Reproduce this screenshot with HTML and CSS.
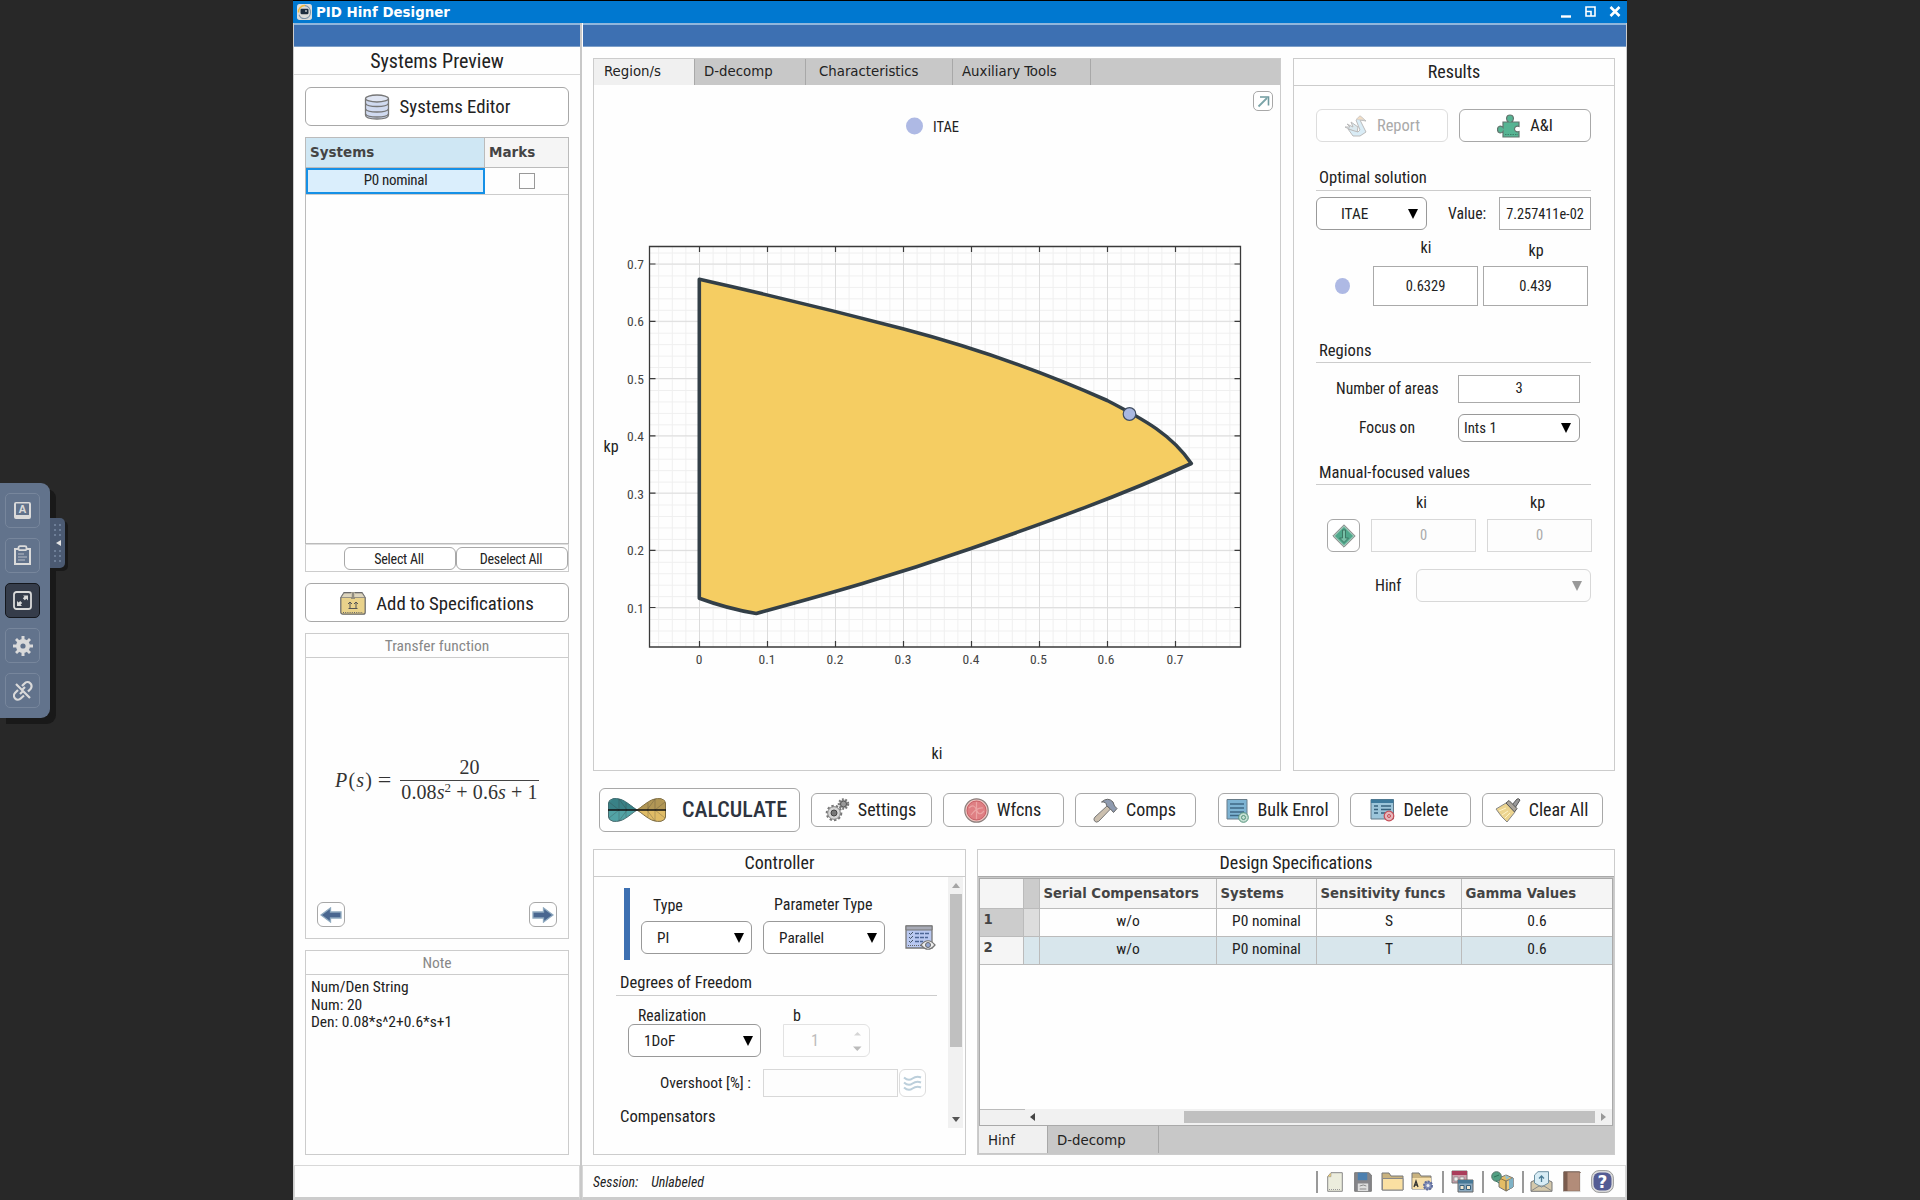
FILE: index.html
```html
<!DOCTYPE html>
<html lang="en">
<head>
<meta charset="utf-8">
<title>PID Hinf Designer</title>
<link rel="stylesheet" href="styles.css">
</head>
<body>
<div class="desktop">
  <main class="window">
    <header class="titlebar">
      <svg class="app-icon" width="15" height="16" viewBox="0 0 15 15" preserveAspectRatio="none"><rect width="15" height="15" rx="2.5" fill="#dcdcda"/><path d="M1.500 8A6 6 0 0 1 8 1.500" fill="none" stroke="#f0b83c" stroke-width="1.500"/><path d="M8 1.500A6 6 0 0 1 13.500 8a6 6 0 0 1-11.500 2" fill="none" stroke="#7d93a8" stroke-width="1"/><rect x="3.500" y="4.500" width="8" height="5" rx="1" fill="#1c2c3e"/><path d="M8 6.500h2" stroke="#fff"/></svg>
      <h1>PID Hinf Designer</h1>
      <svg class="window-buttons" width="62" height="14" viewBox="0 0 62 14"><path d="M1 11.500h10" stroke="#fff" stroke-width="2.400"/><path d="M26 2h9v9h-9zM26 6.500h5v4.500" fill="none" stroke="#fff" stroke-width="1.600"/><path d="M50.500 2l9 9M59.500 2l-9 9" stroke="#fff" stroke-width="2.600"/></svg>
    </header>
    <div class="panes">
      <aside class="left-pane">
        <div class="ribbon"></div>
        <h2 class="pane-title">Systems Preview</h2>
        <div class="left-body">
          <button class="btn big">
            <svg width="26" height="26" viewBox="0 0 26 26"><path d="M1.500 5v16c0 2.500 5 4 11.500 4s11.500-1.500 11.500-4V5" fill="#d0daf0" stroke="#777" stroke-width="1.300"/><ellipse cx="13" cy="4.500" rx="11.500" ry="3.500" fill="#dfe5f3" stroke="#777" stroke-width="1.300"/><path d="M1.500 9.500c2 4 21 4 23 0M1.500 15c2 4 21 4 23 0M1.500 20c2 4 21 4 23 0" fill="none" stroke="#777" stroke-width="1.300"/></svg>
            <span>Systems Editor</span>
          </button>
          <div class="systems-table">
            <div class="sys-head"><b>Systems</b><b>Marks</b></div>
            <div class="sys-row"><span class="selected-cell">P0 nominal</span><span class="mark"><i></i></span></div>
          </div>
          <div class="select-bar"><button class="btn">Select All</button><button class="btn">Deselect All</button></div>
          <button class="btn big add">
            <svg width="26" height="23" viewBox="0 0 26 23"><path d="M4 .7h18l3.200 5v14.500q0 2-2 2H2.800q-2 0-2-2V5.700z" fill="#e9d28b" stroke="#666" stroke-width="1.200"/><path d="M4 1h18l3 4.500H1z" fill="#ddd5bd" stroke="#777" stroke-width=".7"/><path d="M11 .5h4v6h-4z" fill="#ccc4ac"/><path d="M13 1v4M11 6h4M10 16v-6m-2 2l2-2 2 2M16 16v-6m-2 2l2-2 2 2M8.500 16.500h9" stroke="#555" fill="none"/><path d="M3 20.500h20" stroke="#666" stroke-dasharray="1 1.200"/></svg>
            <span>Add to Specifications</span>
          </button>
          <section class="box tf">
            <h3>Transfer function</h3>
            <div class="formula">
              <span class="lhs"><i>P</i>(<i>s</i>) <span class="eq">=</span></span>
              <span class="frac"><span>20</span><span class="den">0.08<i>s</i><sup>2</sup> + 0.6<i>s</i> + 1</span></span>
            </div>
            <div class="nav">
              <button class="btn"><svg width="22" height="16" viewBox="0 0 22 16"><path d="M1 8l9.500-7v4H21v6H10.500v4z" fill="#4a6790" stroke="#8ea9bf" stroke-width="1.300"/></svg></button>
              <button class="btn"><svg width="22" height="16" viewBox="0 0 22 16"><path d="M21 8l-9.500-7v4H1v6h10.500v4z" fill="#4a6790" stroke="#8ea9bf" stroke-width="1.300"/></svg></button>
            </div>
          </section>
          <section class="box note">
            <h3>Note</h3>
            <p>Num/Den String<br>Num: 20<br>Den: 0.08*s^2+0.6*s+1</p>
          </section>
        </div>
        <div class="left-status"></div>
      </aside>

      <div class="right-pane">
        <div class="ribbon"></div>
        <div class="upper">
          <section class="box regions">
            <nav class="tabs"><span class="on">Region/s</span><span>D-decomp</span><span>Characteristics</span><span>Auxiliary Tools</span></nav>
            <button class="btn popout"><svg width="13" height="13" viewBox="0 0 13 13"><path d="M1.500 11.500l8.500-8.500" stroke="#7aa4a8" stroke-width="1.800"/><path d="M3 2h8.500v8.500" fill="none" stroke="#6f9a9f" stroke-width="1.600"/></svg></button>
            <svg class="chart" width="685" height="685" viewBox="594 85 685 685">
              <defs>
                <pattern id="minor" x="699" y="264" width="13.600" height="11.454" patternUnits="userSpaceOnUse"><path d="M0 .5H14M.5 0V12" stroke="#efefef"/></pattern>
                <pattern id="major" x="699" y="263.500" width="68" height="57.270" patternUnits="userSpaceOnUse"><path d="M0 .5H68M.5 0V58" stroke="#dcdcdc"/></pattern>
              </defs>
              <circle cx="914.500" cy="126" r="8.500" fill="#aeb9e4"/>
              <text x="933" y="132" class="legend">ITAE</text>
              <rect x="650" y="246" width="591" height="401" fill="url(#minor)"/>
              <rect x="650" y="246" width="591" height="401" fill="url(#major)"/>
              <path d="M649.500 246.500H1240.500V647H649.500z" fill="none" stroke="#3a3a3a" stroke-width="1.300"/>
              <path d="M699.500 246v6m68-6v6m68-6v6m68-6v6m68-6v6m68-6v6m68-6v6m68-6v6M699.500 647v-6m68 6v-6m68 6v-6m68 6v-6m68 6v-6m68 6v-6m68 6v-6m68 6v-6M650 264h5.500M650 321.300h5.500M650 378.600h5.500M650 435.800h5.500M650 493.100h5.500M650 550.400h5.500M650 607.500h5.500M1240 264h-5.500M1240 321.300h-5.500M1240 378.600h-5.500M1240 435.800h-5.500M1240 493.100h-5.500M1240 550.400h-5.500M1240 607.500h-5.500" stroke="#3a3a3a" stroke-width="1.200"/>
              <path d="M699.300 279.300C767 294.500 835 311 902.800 328.800S1041 371 1107.200 400.500C1145 420 1172 435 1191.300 463.500C1120 496 1050 521 971 548.500S830 593.500 756.300 613.500Q727 608.500 699.300 598.200z" fill="#f5cd62" stroke="#333f47" stroke-width="3.600" stroke-linejoin="round"/>
              <circle cx="1129.500" cy="414" r="6.300" fill="#aab8e0" stroke="#3f4d62" stroke-width="1.200"/>
              <g class="ticks" text-anchor="end"><text x="644" y="268.800">0.7</text><text x="644" y="326.200">0.6</text><text x="644" y="384">0.5</text><text x="644" y="441">0.4</text><text x="644" y="498.500">0.3</text><text x="644" y="555.300">0.2</text><text x="644" y="613">0.1</text></g>
              <g class="ticks" text-anchor="middle"><text x="699" y="664">0</text><text x="767" y="664">0.1</text><text x="835" y="664">0.2</text><text x="903" y="664">0.3</text><text x="971" y="664">0.4</text><text x="1038.500" y="664">0.5</text><text x="1106" y="664">0.6</text><text x="1175" y="664">0.7</text></g>
              <text class="axis" x="611" y="452" text-anchor="middle">kp</text>
              <text class="axis" x="937" y="759" text-anchor="middle">ki</text>
            </svg>
          </section>

          <section class="box results">
            <h3 class="head">Results</h3>
            <div class="row two-buttons">
              <button class="btn faded"><svg width="24" height="22" viewBox="0 0 24 22"><path d="M1 12h5l-3-3 6 3-2-5 7 5-1 6z" fill="#dbe9ef" stroke="#bbb"/><path d="M12 5l4-4 6 5-6-1 6 12-6 4H9l-5-7 10 3 2-2z" fill="#d9ecf6" stroke="#bbb"/><path d="M12 4.500l4-3.800 5 4.300z" fill="#f2ddc4" stroke="#ccc" stroke-width=".7"/></svg><span>Report</span></button>
              <button class="btn"><svg width="24" height="24" viewBox="0 0 24 24"><path d="M6 8h5.500c-3-2-2.500-7 1.500-7s4.500 5 1.500 7H22v4.500c-6-2-6 7 0 5V23H6v-5.500c-2 2.500-5.500 1.500-5.500-2S4 11 6 13.500z" fill="#56b493" stroke="#62756e" stroke-width="1.200"/><path d="M8 20.500h13" stroke="#3d8069" stroke-dasharray="1.500 1"/></svg><span>A&amp;I</span></button>
            </div>
            <h4 class="optimal">Optimal solution</h4>
            <div class="row solution"><div class="combo">ITAE<b></b></div><span class="value-label">Value:</span><div class="field">7.257411e-02</div></div>
            <div class="row param-labels"><span>ki</span><span>kp</span></div>
            <div class="row params"><i class="dot"></i><div class="field">0.6329</div><div class="field">0.439</div></div>
            <h4 class="reg">Regions</h4>
            <div class="row areas"><span>Number of areas</span><div class="field">3</div></div>
            <div class="row focus"><span>Focus on</span><div class="combo">Ints 1<b></b></div></div>
            <h4 class="manual">Manual-focused values</h4>
            <div class="row manual-labels"><span>ki</span><span>kp</span></div>
            <div class="row manual-values">
              <button class="btn"><svg width="24" height="24" viewBox="0 0 24 24"><path d="M12 .8L23.200 12 12 23.200.8 12z" fill="#9fc5b6" stroke="#888"/><path d="M12 3l9 9-9 9-9-9z" fill="#4fa88b"/><path d="M10.500 6h3v8h3L12 18.500 7.500 14h3z" fill="#77c0a6" stroke="#39705d" stroke-width=".9"/></svg></button>
              <div class="field off">0</div><div class="field off">0</div>
            </div>
            <div class="row hinf"><span>Hinf</span><div class="combo off"><b></b></div></div>
          </section>
        </div>

        <div class="actions">
          <button class="btn calculate">
            <svg width="58" height="24" viewBox="0 0 58 24"><path d="M5 .7C15-.5 20 6 29 12 20 18 15 24.500 5 23.300Q.5 22 .5 19V5Q.5 2 5 .7z" fill="#52a3a5" stroke="#476a6e"/><path d="M53 .7C43-.5 38 6 29 12c9 6 14 12.500 24 11.300q4.500-1.300 4.500-4.300V5q0-3-4.500-4.300z" fill="#e0bc66" stroke="#7c6c44"/><path d="M.5 5L5 .7C15-.5 20 6 29 12H.5z" fill="#2c6f74" opacity=".65"/><path d="M57.500 5L53 .7C43-.5 38 6 29 12h28.500z" fill="#8d7847" opacity=".55"/><path d="M11 1v22M18 5v14M1 4l10 8-10 8M11 1l8 11-8 11M47 1v22M40 5v14M57 4l-10 8 10 8M47 1l-8 11 8 11" stroke="#333" stroke-width=".6" opacity=".45" fill="none"/><path d="M0 12h58" stroke="#111" stroke-width="1.400"/></svg>
            <span>CALCULATE</span>
          </button>
          <button class="btn settings"><svg width="25" height="24" viewBox="0 0 25 24"><circle cx="9" cy="15" r="6.800" fill="#d4d4d4" stroke="#777" stroke-width="3" stroke-dasharray="2.200 2"/><circle cx="9" cy="15" r="6.300" fill="#d6d6d6" stroke="#888"/><circle cx="9" cy="15" r="3" fill="#777" stroke="#444"/><circle cx="18.500" cy="6" r="4.500" fill="#b9b9b9" stroke="#777" stroke-width="2.500" stroke-dasharray="1.700 1.500"/><circle cx="18.500" cy="6" r="3" fill="#999" stroke="#555"/></svg><span>Settings</span></button>
          <button class="btn wfcns"><svg width="25" height="25" viewBox="0 0 25 25"><circle cx="12.500" cy="12.500" r="11.700" fill="#eec3bf" stroke="#8b7f7d" stroke-width="1.200"/><circle cx="12.500" cy="12.500" r="9.500" fill="#df7f83" stroke="#c85f66"/><path d="M5 10q5-5 7.500 2t7.500 1M7 17q6-8 12-7M12.500 4v17" fill="none" stroke="#eba5a5" stroke-width="1.200"/></svg><span>Wfcns</span></button>
          <button class="btn comps"><svg width="25" height="25" viewBox="0 0 25 25"><path d="M14 8l3.500 3L5.500 23.500Q3 25 1.500 23T2 19z" fill="#cbbfae" stroke="#777"/><path d="M8.500 4Q15-1.500 20 4l1.500 4 2.500 2.500-3.500 4-3-3.500-4-3.500q0-4-5-3.500z" fill="#8f9bb0" stroke="#666"/></svg><span>Comps</span></button>
          <button class="btn bulk"><svg width="23" height="25" viewBox="0 0 23 25"><path d="M1 1.500h20v19.500H1z" fill="#7db3d3" stroke="#697d8a"/><path d="M4 6h14M4 10h14M4 14h14M4 17.500h9" stroke="#3f6885" stroke-width="1.500"/><circle cx="17.500" cy="19.500" r="4.800" fill="#c4dfd3" stroke="#55937c"/><circle cx="17.500" cy="19.500" r="2" fill="none" stroke="#55937c"/></svg><span>Bulk Enrol</span></button>
          <button class="btn delete"><svg width="25" height="24" viewBox="0 0 25 24"><path d="M1 1.500h22.500v19.500H1z" fill="#9cc5da" stroke="#607888"/><path d="M1 1.500h22.500v3.500H1z" fill="#3d7a9d"/><path d="M4 8h4M4 11.500h4M4 15h4M11 8h10M11 11.500h10M11 15h5" stroke="#36627e" stroke-width="1.700"/><circle cx="19" cy="18" r="4.800" fill="#e7b7bb" stroke="#c64d56" stroke-width="1.200"/><circle cx="19" cy="18" r="1.500" fill="none" stroke="#c64d56"/></svg><span>Delete</span></button>
          <button class="btn clear"><svg width="26" height="25" viewBox="0 0 26 25"><path d="M17 7L22 1q2-1 3 1l-5 8z" fill="#999" stroke="#555"/><path d="M1 11l10-6 9 9-8 10Q7 20 1 11z" fill="#ecd48f" stroke="#888"/><path d="M11 5l3-2.500 8 8-2.500 3.500z" fill="#aaa49a" stroke="#555"/><path d="M4 13l7-3M7 17l6-4M10 20l5-5" stroke="#fff3c8"/></svg><span>Clear All</span></button>
        </div>

        <div class="lower">
          <section class="box controller">
            <h3 class="head">Controller</h3>
            <div class="ctl-area">
              <div class="ctl-form">
                <div class="type-group">
                  <i class="accent"></i>
                  <div class="stack kind"><span>Type</span><div class="combo">PI<b></b></div></div>
                  <div class="stack ptype"><span>Parameter Type</span><div class="combo">Parallel<b></b></div></div>
                  <svg width="31" height="26" viewBox="0 0 31 26"><path d="M1 1h26v22H1z" fill="#b9c8f0" stroke="#777" stroke-width="1.300"/><path d="M1 1h26v4H1z" fill="#a7aab6" stroke="#777"/><path d="M4 8l1.500 1.500L8 7M4 12l1.500 1.500L8 11M4 16l1.500 1.500L8 15" fill="none" stroke="#456"/><path d="M10 8.500h14M10 12.500h13M10 16.500h8" stroke="#4d6696" stroke-width="1.300" stroke-dasharray="4 1"/><path d="M3 20.500h14" stroke="#666" stroke-dasharray="1 1"/><path d="M16 20q7-8.500 14 0-7 8.500-14 0z" fill="#eee" stroke="#777" stroke-width="1.200"/><circle cx="23" cy="20" r="2.500" fill="#97a9d4" stroke="#666"/></svg>
                </div>
                <h4 class="dof">Degrees of Freedom</h4>
                <div class="row dof-row">
                  <div class="stack real"><span>Realization</span><div class="combo">1DoF<b></b></div></div>
                  <div class="stack bval"><span>b</span><div class="spin"><em>1</em><svg width="9" height="20" viewBox="0 0 9 20"><path d="M1 4.500l3.500-3.500L8 4.500z" fill="#d5d5d5"/><path d="M0 15.500h8.500L4.300 20z" fill="#bbb"/></svg></div></div>
                </div>
                <div class="row over"><span>Overshoot [%] :</span><div class="field off"></div><button class="btn faded"><svg width="19" height="17" viewBox="0 0 19 17"><path d="M1 2.500q4.500 4 8.500 1t8.500-1M1 7.500q4.500 4 8.500 1t8.500-1M1 12.500q4.500 4 8.500 1t8.500-1" fill="none" stroke="#bccfdb" stroke-width="2"/></svg></button></div>
                <h4 class="compensators">Compensators</h4>
              </div>
              <div class="vscroll"><svg width="8" height="5" viewBox="0 0 8 5"><path d="M0 5l4-5 4 5z" fill="#a5a5a5"/></svg><i></i><svg width="8" height="5" viewBox="0 0 8 5"><path d="M0 0l4 5 4-5z" fill="#555"/></svg></div>
            </div>
          </section>

          <section class="box specs">
            <h3 class="head">Design Specifications</h3>
            <div class="spec-frame">
              <div class="srow shead"><b></b><b class="dark"></b><b>Serial Compensators</b><b>Systems</b><b>Sensitivity funcs</b><b>Gamma Values</b></div>
              <div class="srow"><b class="dark">1</b><span class="dim"></span><span>w/o</span><span>P0 nominal</span><span>S</span><span>0.6</span></div>
              <div class="srow alt"><b>2</b><span></span><span>w/o</span><span>P0 nominal</span><span>T</span><span>0.6</span></div>
              <div class="space"></div>
              <div class="hscroll"><div class="corner"></div><svg width="5" height="8" viewBox="0 0 5 8"><path d="M5 0L0 4l5 4z" fill="#444"/></svg><i></i><svg width="5" height="8" viewBox="0 0 5 8"><path d="M0 0l5 4-5 4z" fill="#999"/></svg></div>
            </div>
            <nav class="tabs bottom"><span class="on">Hinf</span><span>D-decomp</span></nav>
          </section>
        </div>

        <footer class="status">
          <em>Session:</em><em>Unlabeled</em>
          <div class="tools">
            <i></i>
            <svg class="t-new" width="16" height="20" viewBox="0 0 16 20"><path d="M4 .7h11.300v18.600H.7V4.500z" fill="#eceddd" stroke="#888"/><path d="M4 .7v4H.7" fill="#f2cf74" stroke="#999" stroke-width=".6"/><path d="M2 17.500h12" stroke="#999" stroke-dasharray="1 1"/></svg>
            <svg class="t-save" width="18" height="20" viewBox="0 0 19 20" preserveAspectRatio="none"><path d="M.7.7h15L18.300 3v16.300H.7z" fill="#858589" stroke="#777"/><path d="M4 .7h10v7.500H4z" fill="#4c80b0"/><path d="M4 11.500h11V19H4z" fill="#dedede"/><path d="M6 14q4-2 7 0M6 17h7" stroke="#888" fill="none"/></svg>
            <svg class="t-open" width="23" height="19" viewBox="0 0 23 19"><path d="M1 1h7l2 3h12v14H1z" fill="#c9b27e" stroke="#777"/><path d="M1.500 6.500H22V18H1.500z" fill="#fae0a2" stroke="#888"/></svg>
            <svg class="t-auto" width="23" height="19" viewBox="0 0 23 19"><path d="M1 1h7l2 3h10v13H1z" fill="#c9b27e" stroke="#777"/><path d="M1.500 6H20v11H1.500z" fill="#f6dfaa"/><path d="M3 15l2-6 2 6M3.800 13h2.500" fill="none" stroke="#333" stroke-width="1.300"/><circle cx="17" cy="13.500" r="4" fill="#8390ba" stroke="#5e6c9c" stroke-width="2" stroke-dasharray="2 1"/><circle cx="17" cy="13.500" r="1.500" fill="#eee"/></svg>
            <i></i>
            <svg class="t-win" width="23" height="23" viewBox="0 0 23 23"><path d="M1 1h15v12H1z" fill="#cda0ac" stroke="#777"/><path d="M1 1h15v4H1z" fill="#aa3d5b"/><path d="M3 7h4v4H3zM9 7h4v4H9z" fill="#eee" stroke="#888" stroke-width=".7"/><path d="M7 10h15v12H7z" fill="#8ba9bf" stroke="#666"/><path d="M7 10h15v3.500H7z" fill="#477896"/><path d="M9 15.500h4v4H9zM15.500 15.500h4v4h-4z" fill="#f2e6d0" stroke="#38607b"/></svg>
            <i></i>
            <svg class="t-pack" width="23" height="21" viewBox="0 0 23 21"><path d="M8 7l7-3 7 3v9l-7 4-7-4z" fill="#e5bd65" stroke="#777"/><path d="M15 10l7-3v9l-7 4z" fill="#e9c77c" stroke="#777"/><path d="M18 8.700l4-1.700v9l-4 2.300z" fill="#7eb2c6"/><path d="M8 7l7 3v10" fill="none" stroke="#8d7642"/><path d="M14 4l5 2.500-4 2" fill="#91c2d2"/><circle cx="5.500" cy="5.500" r="4.800" fill="#51a083" stroke="#58746a"/><path d="M3 6l5-2M5 10l3 2" stroke="#2d7258"/></svg>
            <i></i>
            <svg class="t-mail" width="23" height="21" viewBox="0 0 23 21"><path d="M1 11L11.500 6 22 11v9.300H1z" fill="#d4c8ab" stroke="#777"/><path d="M4.500 4L8 .7h10.500V12l-7 4-7-4z" fill="#d7ecf5" stroke="#6c8fa0"/><path d="M11.500 11V5M9 7.500L11.500 5 14 7.500" fill="none" stroke="#4c7d96" stroke-width="1.300"/><path d="M1 20l8-5h5l8 5" fill="none" stroke="#888"/></svg>
            <svg class="t-book" width="18" height="22" viewBox="0 0 18 22"><path d="M.8.8h15.500q1 0 1 1v18.500H.8z" fill="#b28c79" stroke="#6d5a50"/><path d="M1 1h3.500v19H1z" fill="#7b5c4e"/><path d="M1 20.800h16.500V2" fill="none" stroke="#eee"/></svg>
            <svg class="t-help" width="23" height="23" viewBox="0 0 23 23"><rect x=".6" y=".6" width="21.800" height="21.800" rx="7.500" fill="#ddd" stroke="#999"/><rect x="2.500" y="2.500" width="18" height="18" rx="6" fill="#545c94"/><text x="11.500" y="18" text-anchor="middle">?</text></svg>
          </div>
        </footer>
      </div>
    </div>
  </main>

  <aside class="dock">
    <span><svg width="19" height="19" viewBox="0 0 19 19"><path fill-rule="evenodd" d="M3 1h13a2 2 0 0 1 2 2v13a2 2 0 0 1-2 2H3a2 2 0 0 1-2-2V3a2 2 0 0 1 2-2zm0 1.500v11.500h13V2.500z" fill="#dadada"/><text x="9.500" y="12.300" text-anchor="middle">A</text></svg></span>
    <span><svg width="19" height="21" viewBox="0 0 19 21"><path d="M2 4h15v15H2z" fill="none" stroke="#dadada" stroke-width="2"/><rect x="5.500" y="1.200" width="8" height="4" rx="1.500" fill="#62738c" stroke="#dadada" stroke-width="1.800"/><path d="M5 9h6M5 12h9M5 15h7" stroke="#b8bec8"/></svg></span>
    <span class="on"><svg width="19" height="19" viewBox="0 0 19 19"><rect x="1" y="1" width="17" height="17" rx="2.500" fill="none" stroke="#dadada" stroke-width="1.800"/><path d="M10 4.500h5v5l-1.700-1.700-1.500 1.500-2-2 1.600-1.500zM4 10l1.600 1.500 1.600-1.500 2 2-1.600 1.600L9 15H4z" fill="#dadada"/></svg></span>
    <span><svg width="20" height="20" viewBox="0 0 20 20"><path d="M8.500 0h3v20h-3zM0 8.500h20v3H0zM2 4l2-2 14 14-2 2zM16 2l2 2L4 18l-2-2z" fill="#dadada"/><circle cx="10" cy="10" r="7" fill="#dadada"/><circle cx="10" cy="10" r="2.600" fill="#62738c"/></svg></span>
    <span><svg width="20" height="20" viewBox="0 0 20 20"><g fill="none" stroke="#dadada" stroke-width="2.200"><path d="M9 5l2.500-2.500a3.800 3.800 0 0 1 6 5.500L15 10.500M5 9l-2.800 2.800a3.800 3.800 0 0 0 5.500 5.700L11 14.500"/><path d="M3 3l14 14M9 9l3-3M7 13l3-3"/></g></svg></span>
    <div class="handle"><svg width="15" height="50" viewBox="0 0 15 50"><g fill="#6d7e97"><path d="M4 6h2v2H4zM9 6h2v2H9zM4 11h2v2H4zM9 11h2v2H9zM4 16h2v2H4zM9 16h2v2H9zM4 32h2v2H4zM9 32h2v2H9zM4 37h2v2H4zM9 37h2v2H9zM4 42h2v2H4zM9 42h2v2H9z"/></g><path d="M11 22v6l-5-3z" fill="#e4e4e4"/></svg></div>
  </aside>
</div>
</body>
</html>
```
FILE: styles.css
```css
* { box-sizing: border-box; }
body { margin: 0; background: #282828; }
.desktop { position: relative; width: 1920px; height: 1200px; overflow: hidden; background: #282828; display: flex; justify-content: center;
  font-family: "Roboto Condensed", Roboto, sans-serif; font-stretch: 75%; font-size: 16px; line-height: 18px; color: #222; }
h1, h2, h3, h4, p { margin: 0; font-weight: 400; }
svg { display: block; flex: none; }
button { font: inherit; color: inherit; padding: 0; }
.window { width: 1334px; height: 1200px; background: #fefefe; border-top: 1px solid #000; display: flex; flex-direction: column; }
.titlebar { height: 22px; background: #0078d0; display: flex; align-items: center; padding: 0 5px 0 4px; }
.titlebar h1 { font: bold 13.400px/20px "DejaVu Sans", sans-serif; color: #fff; margin-left: 4px; padding-top: 1px; flex: 1; }
.panes { flex: 1; display: flex; border-left: 1px solid #ccc; border-right: 1px solid #ccc; }
.left-pane { width: 288px; border-right: 2px solid #c8c8c8; display: flex; flex-direction: column; }
.right-pane { flex: 1; display: flex; flex-direction: column; }
.ribbon { height: 24px; background: #3d70b2; border-top: 2px solid #8fb6dc; border-bottom: 1px solid #7d9fc8; }
.right-pane .ribbon { margin-left: 1px; }
.pane-title { height: 28px; line-height: 28px; font-size: 20px; text-align: center; border-bottom: 1px solid #d8d8d8; }
.left-body { width: 264px; margin-left: 11px; padding-top: 12px; flex: 1; display: flex; flex-direction: column; }
.btn { border: 1px solid #a8a8a8; border-radius: 6px; background: #fff; display: flex; align-items: center; justify-content: center; flex: none; }
.big { height: 39px; font-size: 18.800px; gap: 10px; }
.systems-table { margin-top: 11px; height: 407px; border: 1px solid #bbb; }
.sys-head { display: flex; height: 30px; border-bottom: 1px solid #bbb; font: bold 13.500px/29px "DejaVu Sans", sans-serif; color: #444; }
.sys-head b { padding-left: 4px; background: #f5f5f5; flex: 1; }
.sys-head b:first-child { flex: none; width: 179px; background: #cfe7f4; border-right: 1px solid #bbb; }
.sys-row { display: flex; height: 27px; border-bottom: 1px solid #ccc; }
.selected-cell { width: 179px; border: 2px solid #1590e6; background: #daeefc; text-align: center; line-height: 20px; font-size: 15px; letter-spacing: -.3px; }
.mark { flex: 1; display: flex; align-items: center; justify-content: center; }
.mark i { width: 16px; height: 16px; border: 1px solid #999; }
.select-bar { height: 28px; border: 1px solid #ccc; display: flex; justify-content: flex-end; align-items: center; border-top-color: #ddd; }
.select-bar .btn { width: 112px; height: 23px; font-size: 14px; letter-spacing: -.25px; padding: 2px 2px 0 0; }
.add { margin-top: 11px; padding-top: 2px; }
.box { border: 1px solid #ccc; background: #fefefe; }
.left-body h3 { border-bottom: 1px solid #ccc; text-align: center; color: #888; height: 24px; line-height: 24px; font-size: 15.500px; }
.tf { margin-top: 11px; height: 306px; display: flex; flex-direction: column; }
.formula { flex: 1; padding: 107px 0 0 29px; display: flex; align-items: flex-start; font-family: "Liberation Serif", serif; font-stretch: normal; font-size: 20px; line-height: 22px; color: #333; }
.lhs { width: 65px; margin-top: 4px; white-space: nowrap; letter-spacing: 1.200px; }
.eq { display: inline-block; transform: scaleX(1.2); }
.frac { width: 139px; text-align: center; margin-top: -9px; }
.frac span { display: block; height: 24px; white-space: nowrap; }
.den { border-top: 1px solid #444; letter-spacing: .1px; }
.den sup { font-size: 13px; line-height: 0; vertical-align: 7px; }
.nav { display: flex; justify-content: space-between; padding: 0 11px 11px; }
.nav .btn { width: 28px; height: 25px; }
.note { margin-top: 11px; height: 205px; }
.note p { padding: 4px 5px; line-height: 17.700px; font-size: 15.500px; }
.left-status { height: 35px; border: 1px solid #d8d8d8; border-bottom: 3px solid #ccc; }

.upper { display: flex; height: 713px; margin: 11px 0 0 11px; flex: none; gap: 12px; }
.regions { width: 688px; position: relative; }
.tabs { height: 26px; background: #c8c8c8; display: flex; font: 14.800px/24px "DejaVu Sans Condensed", "DejaVu Sans", sans-serif; font-stretch: condensed; color: #222; }
.tabs span { border-right: 1px solid #a8a8a8; padding-left: 10px; }
.tabs .on { background: #f0f0f0; width: 101px; }
.tabs span:nth-child(2) { width: 111px; padding-left: 9px; }
.tabs span:nth-child(3) { width: 147px; padding-left: 13px; }
.tabs span:nth-child(4) { width: 138px; padding-left: 9px; }
.chart { position: relative; }
.chart text { fill: #222; }
.legend { font-size: 14.500px; }
.ticks { font-size: 13.500px; }
.chart .ticks text { fill: #444; }
.axis { font-size: 16px; }
.popout { position: absolute; z-index: 1; right: 7px; top: 32px; width: 20px; height: 20px; border-radius: 5px; }
.head { font-size: 18px; text-align: center; height: 27px; line-height: 26px; border-bottom: 1px solid #ccc; }
.results { width: 322px; }
.results > * { width: 275px; margin-left: 22px; }
.results > .head { width: auto; margin-left: 0; }
.row { display: flex; flex: none; }
.two-buttons { margin-top: 23px; justify-content: space-between; }
.two-buttons .btn { width: 132px; height: 33px; gap: 9px; font-size: 16.500px; }
.two-buttons .faded, .faded { color: #aaa; border-color: #ddd; }
h4 { border-bottom: 1px solid #ccc; padding-left: 4px; height: 24px; line-height: 22px; font-size: 16.600px; }
.results h4 { padding-left: 3px; }
.optimal { margin-top: 25px; }
.field { border: 1px solid #aaa; display: flex; align-items: center; justify-content: center; font-size: 14.500px; background: #fff; flex: none; }
.combo { border: 1px solid #999; border-radius: 6px; background: #fff; display: flex; align-items: center; justify-content: space-between; height: 33px; padding: 0 8px 0 24px; font-size: 15.300px; flex: none; }
.combo b { border: 5.500px solid transparent; border-top: 10px solid #000; border-bottom: 0; margin-left: auto; }
.off { color: #aaa; border-color: #d8d8d8; background: #fdfdfd; }
.off b { border-top-color: #999; }
.solution { margin-top: 6px; align-items: center; }
.solution .combo { width: 111px; }
.value-label { width: 72px; padding-left: 21px; font-size: 15.700px; }
.solution .field { width: 92px; height: 33px; white-space: nowrap; font-size: 14.300px; }
.param-labels { margin-top: 9px; height: 20px; }
.param-labels span, .manual-labels span { width: 110px; text-align: center; }
.param-labels span:first-child { margin-left: 55px; }
.param-labels span:last-child { padding-top: 3px; }
.params { margin-top: 7px; align-items: center; gap: 5px; }
.dot { width: 15px; height: 16px; border-radius: 50%; background: #aeb9e4; margin: 0 18px 0 19px; }
.params .field { width: 105px; height: 40px; padding-top: 1px; }
.results .reg { margin-top: 33px; line-height: 23px; }
.areas { margin-top: 12px; align-items: center; }
.areas span, .focus span { width: 142px; padding-left: 20px; white-space: nowrap; font-size: 15.600px; }
.areas .field { width: 122px; height: 28px; }
.focus { margin-top: 11px; align-items: center; }
.focus span { padding-left: 43px; }
.focus .combo { width: 122px; height: 28px; padding-left: 5px; font-size: 14.800px; }
.results .manual { margin-top: 19px; line-height: 23px; }
.manual-labels { margin-top: 9px; }
.manual-labels span:first-child { margin: 0 9px 0 52px; }
.manual-values { margin-top: 7px; gap: 11px; }
.manual-values .btn { width: 33px; height: 33px; margin-left: 11px; }
.manual-values .field { width: 105px; height: 33px; padding-top: 1px; }
.hinf { margin-top: 17px; align-items: center; }
.hinf span { width: 100px; padding-left: 59px; }
.hinf .combo { width: 175px; }

.actions { height: 44px; margin: 17px 0 0 17px; display: flex; align-items: center; flex: none; font-size: 18px; }
.actions .btn { height: 34px; width: 121px; margin-right: 11px; gap: 8px; padding-right: 2px; }
.actions .calculate { width: 201px; height: 44px; font-size: 22px; gap: 16px; padding-left: 8px; justify-content: flex-start; font-weight: 500; color: #2e3440; }
.actions .comps { margin-right: 22px; }

.lower { display: flex; height: 306px; margin: 17px 0 0 11px; gap: 11px; flex: none; }
.controller { width: 373px; }
.ctl-area { display: flex; height: 251px; overflow: hidden; }
.ctl-form { width: 354px; padding-left: 22px; }
.type-group { height: 72px; margin-top: 11px; display: flex; align-items: flex-end; }
.accent { width: 6px; height: 72px; background: #3d70b2; margin-left: 8px; }
.stack { display: flex; flex-direction: column; }
.kind { width: 111px; margin: 0 11px 6px 11px; }
.kind > span { padding: 0 0 6px 12px; }
.ptype { width: 122px; margin: 0 20px 6px 0; }
.ptype > span { padding: 0 0 7px 11px; white-space: nowrap; }
.kind .combo, .ptype .combo { padding: 0 7px 0 15px; }
.type-group > svg { margin-bottom: 9px; }
.dof { margin-top: 12px; width: 321px; line-height: 22px; }
.dof-row { margin-top: 11px; }
.real { width: 133px; margin-left: 12px; }
.real > span { padding-left: 10px; font-size: 15.600px; height: 17px; }
.real .combo { padding: 0 7px 0 15px; }
.bval { width: 87px; margin-left: 22px; }
.bval > span { padding-left: 10px; height: 17px; }
.spin { height: 33px; border: 1px solid #e2e2e2; border-radius: 0 6px 6px 0; display: flex; justify-content: space-between; align-items: center; padding: 0 7px 0 27px; color: #bbb; }
.spin em { font-style: normal; }
.over { margin-top: 12px; align-items: center; }
.over span { width: 147px; padding-left: 44px; white-space: nowrap; font-size: 15.500px; }
.over .field { width: 135px; height: 28px; }
.over .btn { width: 27px; height: 28px; margin-left: 1px; }
.compensators { margin-top: 9px; border: 0; }
.vscroll { width: 15px; background: #f1f1f1; display: flex; flex-direction: column; align-items: center; padding: 6px 0; }
.vscroll i { width: 12px; height: 153px; background: #c0c0c0; margin: 6px 0 auto; }

.specs { width: 638px; background: #c8c8c8; }
.specs .head { background: #fefefe; border-bottom-color: #aaa; }
.spec-frame { margin: 1px 1px 0; height: 248px; border: 1px solid #aaa; background: #fefefe; display: flex; flex-direction: column; }
.srow { display: grid; grid-template-columns: 44px 16px 177px 100px 145px 1fr; height: 28px; flex: none; }
.srow > * { border-right: 1px solid #bbb; border-bottom: 1px solid #bbb; text-align: center; line-height: 25px; font-size: 15.500px; white-space: nowrap; overflow: hidden; }
.srow > *:last-child { border-right: 0; }
.srow b { background: #f5f5f5; font: bold 13.300px/22px "DejaVu Sans", sans-serif; color: #444; text-align: left; padding-left: 3.500px; }
.srow.shead { height: 30px; }
.srow.shead b { line-height: 29px; }
.srow b.dark { background: #ccc; }
.srow .dim { background: #ddd; }
.alt span { background: #d8e6ec; }
.space { flex: 1; }
.hscroll { height: 16px; background: #f1f1f1; display: flex; align-items: center; }
.corner { width: 45px; border-top: 1px solid #bbb; align-self: stretch; margin-right: 5px; }
.hscroll i { width: 411px; height: 12px; background: #c0c0c0; margin: 0 6px 0 auto; }
.hscroll > svg:last-child { margin-right: 6px; }
.bottom { margin: 0 1px; height: 27px; line-height: 28px; }
.bottom .on { width: 69px; padding-left: 9px; }

.status { margin-top: auto; height: 35px; border: 1px solid #d8d8d8; border-bottom: 3px solid #ccc; display: flex; align-items: center; padding: 0 11px 0 10px; font-size: 13.900px; }
.status em + em { margin-left: 13px; }
.tools { margin-left: auto; display: flex; align-items: center; gap: 8px; }
.tools i { width: 2px; height: 22px; background: #999; margin-right: -2px; }
.t-new { margin-left: 3px; }
.t-save { margin-left: 3px; }
.t-open { margin-left: 1px; }
.t-auto { margin-left: -1px; }
.t-win, .t-pack { margin-left: 1px; }
.t-book, .t-help { margin-left: 2px; }
.t-help text { font: bold 17px "DejaVu Sans", sans-serif; fill: #fff; }

.dock { position: absolute; left: 0; top: 483px; width: 50px; height: 235px; border-radius: 0 9px 9px 0; background: #62738c; box-shadow: 6px 6px 0 #191919; padding: 10px 5px; display: flex; flex-direction: column; gap: 10px; }
.dock > span { width: 35px; height: 35px; border: 1px solid #77869c; border-radius: 5px; display: flex; align-items: center; justify-content: center; }
.dock > .on { background: #353c4a; border-color: #14171d; }
.dock text { font: bold 11px "Liberation Sans", sans-serif; fill: #dadada; }
.handle { position: absolute; left: 50px; top: 35px; width: 15px; height: 50px; background: #4b5a72; border-radius: 0 5px 5px 0; box-shadow: 3px 3px 0 #191919; }
```
